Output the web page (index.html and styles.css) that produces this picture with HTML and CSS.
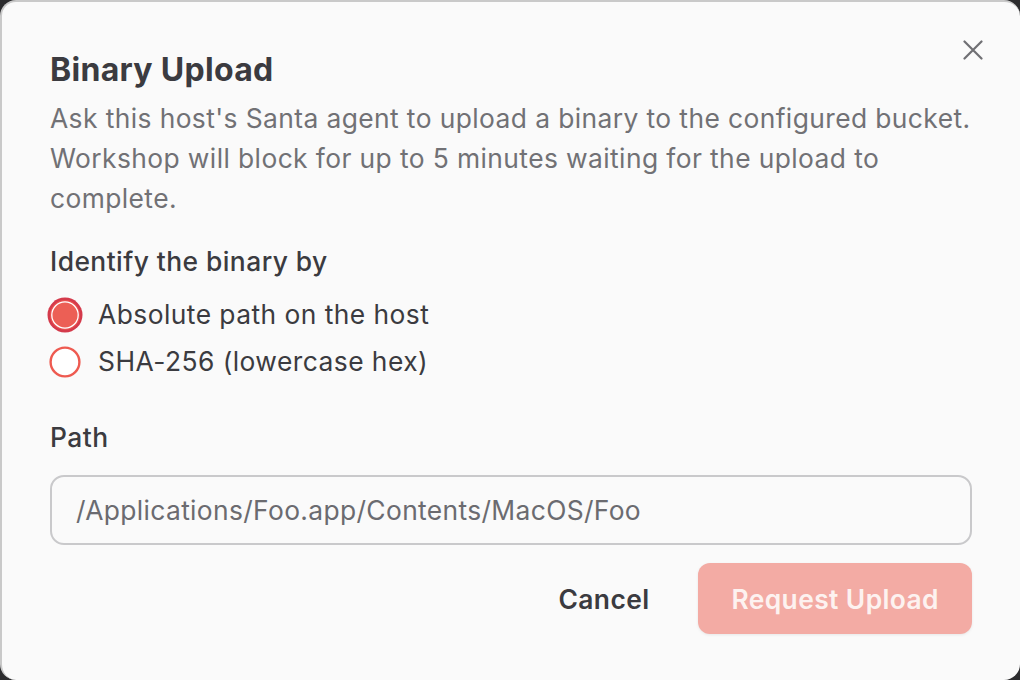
FILE: index.html
```html
<!DOCTYPE html>
<html lang="en">
<head>
<meta charset="utf-8">
<title>Binary Upload</title>
<link rel="stylesheet" href="styles.css">
</head>
<body>
<div class="dialog" role="dialog" aria-labelledby="dlg-title">
  <div class="header">
    <h2 id="dlg-title" class="title">Binary Upload</h2>
    <button class="close" aria-label="Close">
      <svg width="20" height="20" viewBox="0 0 20 20"><path d="M1.5 1.5 L18.5 18.5 M18.5 1.5 L1.5 18.5" stroke="#6f6f73" stroke-width="2.2" stroke-linecap="round" fill="none"/></svg>
    </button>
  </div>
  <p class="desc">Ask this host's Santa agent to upload a binary to the configured bucket. Workshop will block for up to 5 minutes waiting for the upload to complete.</p>

  <div class="field-label">Identify the binary by</div>
  <div class="radios">
    <label class="option">
      <span class="radio">
        <svg width="36" height="36" viewBox="0 0 36 36">
          <circle cx="18" cy="18" r="17.5" fill="#d43a4b"/>
          <circle cx="18" cy="18" r="15" fill="#e9524f"/>
          <circle cx="18" cy="18" r="13.2" fill="#ec5f55" stroke="#ffffff" stroke-width="1.3"/>
        </svg>
      </span>
      <span class="option-text">Absolute path on the host</span>
    </label>
    <label class="option">
      <span class="radio">
        <svg width="36" height="36" viewBox="0 0 36 36">
          <circle cx="18" cy="18" r="14.4" fill="#ffffff" stroke="#ee5a50" stroke-width="2.4"/>
        </svg>
      </span>
      <span class="option-text">SHA-256 (lowercase hex)</span>
    </label>
  </div>

  <div class="field-label path-label">Path</div>
  <div class="input">/Applications/Foo.app/Contents/MacOS/Foo</div>

  <div class="actions">
    <button class="btn-cancel">Cancel</button>
    <button class="btn-primary">Request Upload</button>
  </div>
</div>
</body>
</html>
```

FILE: styles.css
```css
* { box-sizing: border-box; }

html, body {
  margin: 0;
  padding: 0;
  width: 1020px;
  height: 680px;
  background: #2c2c2e;
  overflow: hidden;
}

body {
  font-family: Inter, "Noto Sans", "Liberation Sans", sans-serif;
  color: #3f3f46;
}

.dialog {
  width: 1020px;
  height: 680px;
  background: #fafafa;
  border-top: 2px solid #c9c9c9;
  border-left: 2px solid #c9c9c9;
  border-radius: 16px;
  padding: 48px 48px 0 48px;
  display: flex;
  flex-direction: column;
}

.header {
  display: flex;
  justify-content: space-between;
  align-items: flex-start;
}

.title {
  margin: 0;
  font-size: 32px;
  line-height: 40px;
  font-weight: 700;
  letter-spacing: 0.3px;
  color: #3b3b40;
}

.close {
  width: 40px;
  height: 40px;
  margin: -20px -21px 0 0;
  padding: 10px;
  border: 0;
  background: transparent;
  display: flex;
  align-items: center;
  justify-content: center;
}

.desc {
  margin: 8px 0 0 0;
  font-size: 26.4px;
  line-height: 40px;
  letter-spacing: 0.4px;
  color: #717175;
}

.field-label {
  margin-top: 23px;
  font-size: 26.4px;
  line-height: 40px;
  letter-spacing: 0.45px;
  font-weight: 500;
  color: #3b3b40;
}

.radios {
  margin-top: 13px;
  display: flex;
  flex-direction: column;
  gap: 7px;
}

.option {
  display: flex;
  align-items: center;
  height: 40px;
  font-size: 26.4px;
  letter-spacing: 0.45px;
  color: #3b3b40;
}

.radio {
  width: 36px;
  height: 36px;
  margin-left: -3px;
  margin-right: 15px;
  display: flex;
  position: relative;
  top: 1px;
}

.path-label {
  margin-top: 36px;
}

.input {
  margin-top: 18px;
  height: 70px;
  flex-shrink: 0;
  border: 2px solid #c9c9cb;
  border-radius: 14px;
  background: #fafafa;
  padding: 0 24px;
  display: flex;
  align-items: center;
  font-size: 26.4px;
  letter-spacing: 0.35px;
  color: #6b6b70;
}

.actions {
  margin-top: 18px;
  display: flex;
  justify-content: flex-end;
  gap: 16px;
}

.btn-cancel,
.btn-primary {
  font-family: inherit;
  font-size: 26.4px;
  letter-spacing: 0.4px;
  font-weight: 600;
  height: 71px;
  padding: 0 33px;
  border: 0;
  border-radius: 12px;
}

.btn-cancel {
  background: transparent;
  color: #3b3b40;
}

.btn-primary {
  background: #f3aba4;
  color: #fdf2f0;
  box-shadow: 0 1px 3px rgba(0, 0, 0, 0.08);
}
```
